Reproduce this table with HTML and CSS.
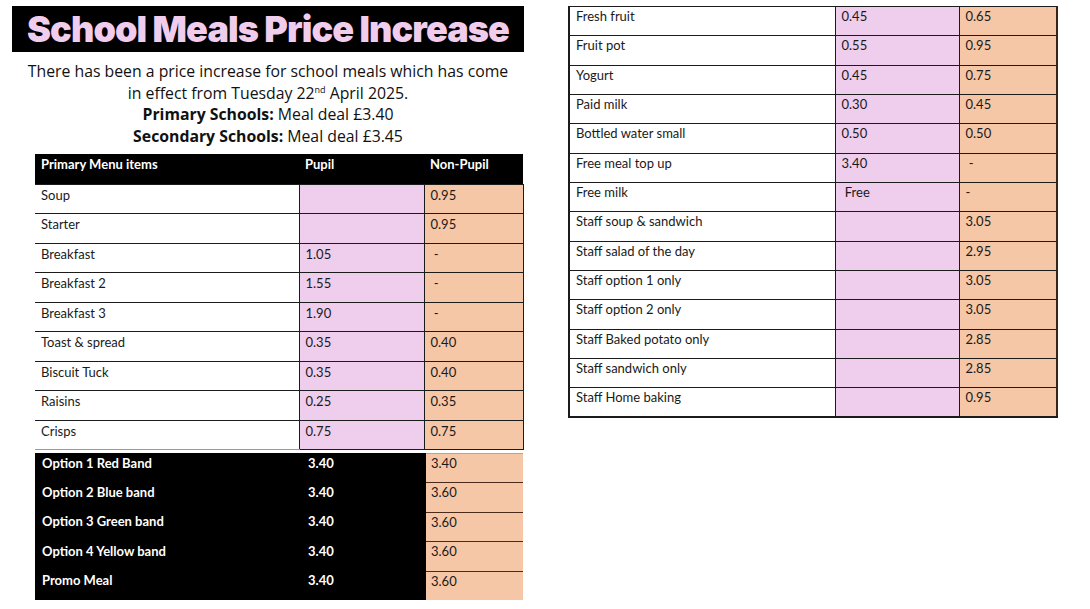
FILE: index.html
```html
<!DOCTYPE html>
<html>
<head>
<meta charset="utf-8">
<link rel="stylesheet" href="styles.css">
</head>
<body>
<div class="page">
  <div class="left">
    <div class="title-bar"><h1 class="title">School Meals Price Increase</h1></div>
    <div class="intro">
      <p>There has been a price increase for school meals which has come<br>in effect from Tuesday 22<sup>nd</sup> April 2025.</p>
      <p><b>Primary Schools:</b> Meal deal £3.40</p>
      <p><b>Secondary Schools:</b> Meal deal £3.45</p>
    </div>
    <table class="menu menu-left">
      <colgroup><col class="c1"><col class="c2"><col class="c3"></colgroup>
      <tr class="head"><th>Primary Menu items</th><th>Pupil</th><th>Non-Pupil</th></tr>
      <tr><td>Soup</td><td class="pink"></td><td class="peach">0.95</td></tr>
      <tr><td>Starter</td><td class="pink"></td><td class="peach">0.95</td></tr>
      <tr><td>Breakfast</td><td class="pink">1.05</td><td class="peach">&nbsp;-</td></tr>
      <tr><td>Breakfast 2</td><td class="pink">1.55</td><td class="peach">&nbsp;-</td></tr>
      <tr><td>Breakfast 3</td><td class="pink">1.90</td><td class="peach">&nbsp;-</td></tr>
      <tr><td>Toast &amp; spread</td><td class="pink">0.35</td><td class="peach">0.40</td></tr>
      <tr><td>Biscuit Tuck</td><td class="pink">0.35</td><td class="peach">0.40</td></tr>
      <tr><td>Raisins</td><td class="pink">0.25</td><td class="peach">0.35</td></tr>
      <tr class="last"><td>Crisps</td><td class="pink">0.75</td><td class="peach">0.75</td></tr>
    </table>
    <table class="options">
      <colgroup><col class="o1"><col class="o2"><col class="o3"></colgroup>
      <tr><td>Option 1 Red Band</td><td>3.40</td><td class="peach">3.40</td></tr>
      <tr><td>Option 2 Blue band</td><td>3.40</td><td class="peach">3.60</td></tr>
      <tr><td>Option 3 Green band</td><td>3.40</td><td class="peach">3.60</td></tr>
      <tr><td>Option 4 Yellow band</td><td>3.40</td><td class="peach">3.60</td></tr>
      <tr><td>Promo Meal</td><td>3.40</td><td class="peach">3.60</td></tr>
    </table>
  </div>
  <div class="right">
    <table class="menu menu-right">
      <colgroup><col class="r1"><col class="r2"><col class="r3"></colgroup>
      <tr><td>Fresh fruit</td><td class="pink">0.45</td><td class="peach">0.65</td></tr>
      <tr><td>Fruit pot</td><td class="pink">0.55</td><td class="peach">0.95</td></tr>
      <tr><td>Yogurt</td><td class="pink">0.45</td><td class="peach">0.75</td></tr>
      <tr><td>Paid milk</td><td class="pink">0.30</td><td class="peach">0.45</td></tr>
      <tr><td>Bottled water small</td><td class="pink">0.50</td><td class="peach">0.50</td></tr>
      <tr><td>Free meal top up</td><td class="pink">3.40</td><td class="peach">&nbsp;-</td></tr>
      <tr><td>Free milk</td><td class="pink">&nbsp;Free</td><td class="peach">-</td></tr>
      <tr><td>Staff soup &amp; sandwich</td><td class="pink"></td><td class="peach">3.05</td></tr>
      <tr><td>Staff salad of the day</td><td class="pink"></td><td class="peach">2.95</td></tr>
      <tr><td>Staff option 1 only</td><td class="pink"></td><td class="peach">3.05</td></tr>
      <tr><td>Staff option 2 only</td><td class="pink"></td><td class="peach">3.05</td></tr>
      <tr><td>Staff Baked potato only</td><td class="pink"></td><td class="peach">2.85</td></tr>
      <tr><td>Staff sandwich only</td><td class="pink"></td><td class="peach">2.85</td></tr>
      <tr><td>Staff Home baking</td><td class="pink"></td><td class="peach">0.95</td></tr>
    </table>
  </div>
</div>
</body>
</html>
```

FILE: styles.css
```css
* { box-sizing: border-box; }
html, body {
  margin: 0;
  padding: 0;
  background: #ffffff;
  width: 1090px;
  height: 609px;
  overflow: hidden;
}
body {
  font-family: Lato, "Liberation Sans", Arial, sans-serif;
  color: #1a1a1a;
}
.page {
  display: flex;
  align-items: flex-start;
  gap: 44px;
  padding: 6px 0 0 12px;
}
.left {
  width: 512px;
  display: flex;
  flex-direction: column;
}
.title-bar {
  background: #000;
  height: 46px;
  display: flex;
  align-items: center;
  justify-content: center;
}
.title {
  margin: 0;
  font-family: Inter, "DejaVu Sans", sans-serif;
  font-weight: 900;
  font-size: 36px;
  letter-spacing: -0.9px;
  color: #f0cdec;
  line-height: 1;
}
.intro {
  text-align: center;
  font-family: "Open Sans", "Liberation Sans", sans-serif;
  font-size: 15.8px;
  line-height: 21.5px;
  color: #111;
  padding-top: 9px;
  padding-bottom: 6px;
}
.intro p { margin: 0; }
.intro b { font-weight: 700; }
.intro sup {
  font-size: 9px;
  line-height: 0;
  vertical-align: 6px;
}
table {
  border-collapse: collapse;
  table-layout: fixed;
  font-size: 13px;
}
.menu-left {
  margin-left: 23px;
  margin-top: 1px;
  width: 488px;
}
.c1 { width: 264px; }
.c2 { width: 125px; }
.c3 { width: 99px; }
.menu td, .menu th {
  height: 29.5px;
  padding: 2px 0 0 6px;
  vertical-align: top;
  text-align: left;
  border-top: 1.5px solid #1b1b1b;
  border-bottom: 1.5px solid #1b1b1b;
  white-space: nowrap;
}
.menu td.pink, .menu td.peach {
  border-left: 1.5px solid #1b1b1b;
}
.menu tr.head th {
  background: #000;
  color: #fff;
  font-weight: 700;
  height: 30px;
  padding-top: 2px;
  border: 0;
}
.menu-left tr.head th:first-child { padding-left: 6px; }
.menu-left td:last-child { border-right: 1.5px solid #1b1b1b; }
.menu-left tr.last td { border-bottom: 1.5px solid #9a9a9a; }
.menu-left tr.last td.pink, .menu-left tr.last td.peach { border-bottom-color: #1b1b1b; }
.pink { background: #efcdec; }
.peach { background: #f6c7a6; }

.options {
  margin-top: 3px;
  margin-left: 23px;
  width: 488px;
  background: #000;
}
.o1 { width: 266px; }
.o2 { width: 125px; }
.o3 { width: 97px; }
.options td {
  height: 29.4px;
  padding: 1px 0 0 7px;
  vertical-align: top;
  color: #fff;
  font-weight: 700;
  white-space: nowrap;
}
.options td.peach {
  color: #1a1a1a;
  font-weight: 400;
  padding-left: 5px;
  border-top: 1.5px solid #4a2a1a;
  border-bottom: 1.5px solid #4a2a1a;
  border-left: 0;
}
.options tr:first-child td.peach { border-top: 1px solid #c8a080; }
.options tr:last-child td.peach { border-bottom: 0; }

.right { width: 490px; }
.menu-right { width: 488px; }
.menu-right td { height: 29.35px; padding-top: 1px; }
.r1 { width: 266px; }
.r2 { width: 124px; }
.r3 { width: 98px; }
.menu-right td:first-child { border-left: 2px solid #1b1b1b; }
.menu-right td:last-child { border-right: 2px solid #3a2418; }
.menu-right tr:last-child td { border-bottom: 2px solid #1b1b1b; }
```
